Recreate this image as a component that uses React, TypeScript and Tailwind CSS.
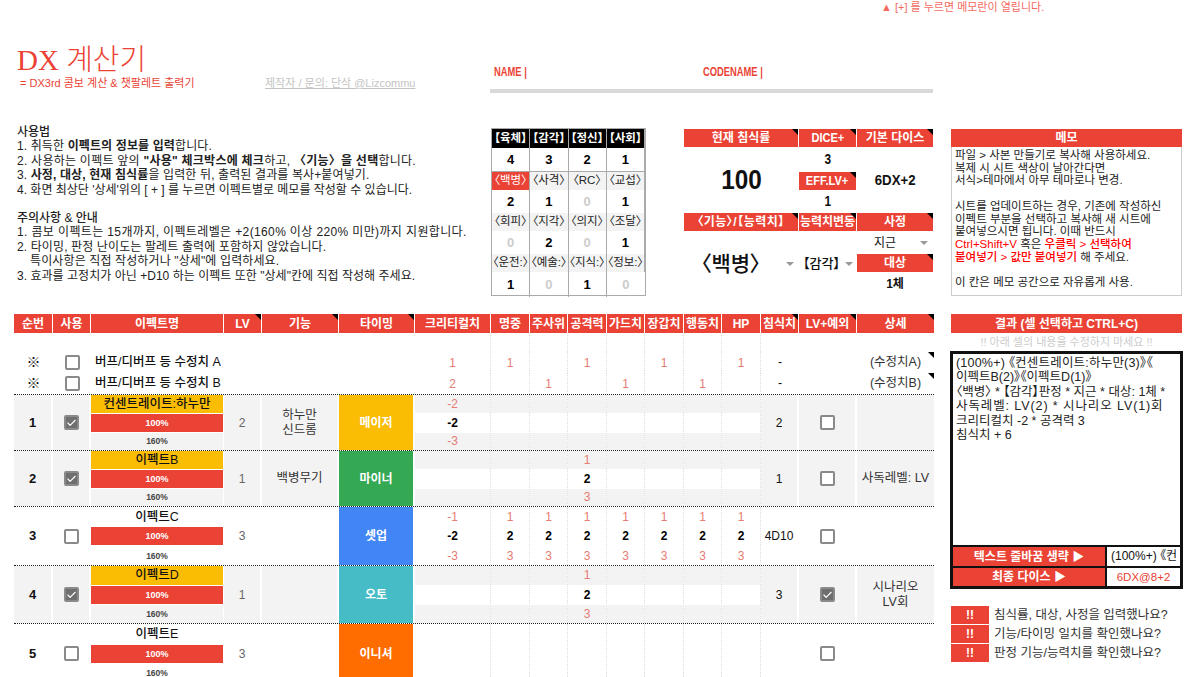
import { Check } from 'lucide-react'
import type { ReactNode } from 'react'

const cols = 'grid grid-cols-[39px_38px_133px_38px_77px_76px_76px_39px_38px_39px_38px_39px_38px_39px_38px_58px_77px]'
const palt = "[font-feature-settings:'palt']"

const headers: [string, boolean][] = [
  ['순번', false], ['사용', false], ['이펙트명', false], ['LV', true], ['기능', true], ['타이밍', true],
  ['크리티컬치', false], ['명중', false], ['주사위', false], ['공격력', false], ['가드치', false],
  ['장갑치', false], ['행동치', false], ['HP', false], ['침식치', true], ['LV+예외', true], ['상세', true],
]

interface Effect {
  no: number
  name: string
  used: boolean
  lv: number
  skill?: string[]
  timing: string
  timingBg: string
  crit?: [string, string, string]
  stats: number[]
  erosion: string
  lvEx: boolean
  note?: string[]
  height: string
}

const effects: Effect[] = [
  { no: 1, name: '컨센트레이트:하누만', used: true, lv: 2, skill: ['하누만', '신드롬'], timing: '메이저', timingBg: 'bg-[#fbbc04]', crit: ['-2', '-2', '-3'], stats: [], erosion: '2', lvEx: false, height: 'h-[56px]' },
  { no: 2, name: '이펙트B', used: true, lv: 1, skill: ['백병무기'], timing: '마이너', timingBg: 'bg-[#34a853]', stats: [2], erosion: '1', lvEx: false, note: ['사독레벨: LV'], height: 'h-[56px]' },
  { no: 3, name: '이펙트C', used: false, lv: 3, timing: '셋업', timingBg: 'bg-[#4285f4]', crit: ['-1', '-2', '-3'], stats: [0, 1, 2, 3, 4, 5, 6], erosion: '4D10', lvEx: false, height: 'h-[59px]' },
  { no: 4, name: '이펙트D', used: true, lv: 1, timing: '오토', timingBg: 'bg-[#46bdc6]', stats: [2], erosion: '3', lvEx: true, note: ['시나리오', 'LV회'], height: 'h-[58px]' },
  { no: 5, name: '이펙트E', used: false, lv: 3, timing: '이니셔', timingBg: 'bg-[#ff6d01]', stats: [], erosion: '', lvEx: false, height: 'h-[60px]' },
]

const attrs = [
  { cells: ['【육체】', '【감각】', '【정신】', '【사회】'] },
  { vals: [4, 3, 2, 1] },
  { cells: ['〈백병〉', '〈사격〉', '〈RC〉', '〈교섭〉'] },
  { vals: [2, 1, 0, 1] },
  { cells: ['〈회피〉', '〈지각〉', '〈의지〉', '〈조달〉'] },
  { vals: [0, 2, 0, 1] },
  { cells: ['〈운전:〉', '〈예술:〉', '〈지식:〉', '〈정보:〉'] },
  { vals: [1, 0, 1, 0] },
]

function Corner() {
  return <span className="absolute right-0 top-0 border-l-[6px] border-t-[6px] border-l-transparent border-t-black" />
}

function Arrow() {
  return <span className="inline-block border-x-[4px] border-t-[4px] border-x-transparent border-t-[#999]" />
}

function Box({ checked }: { checked: boolean }) {
  return (
    <span className={`flex h-[15px] w-[15px] items-center justify-center rounded-[2px] border-2 border-[#8a8a8a] ${checked ? 'bg-[#6f6f6f]' : 'bg-white'}`}>
      {checked && <Check size={12} strokeWidth={2.5} className="text-white" />}
    </span>
  )
}

function Head({ children, corner = false, className = '' }: { children: ReactNode; corner?: boolean; className?: string }) {
  return (
    <div className={`relative flex items-center justify-center bg-[#ea4335] text-[12px] font-bold text-white ${className}`}>
      {children}
      {corner && <Corner />}
    </div>
  )
}

function Triple({ top, mid, bottom, active }: { top?: string; mid?: string; bottom?: string; active: boolean }) {
  const edge = active ? 'bg-[#f3f3f3]' : 'bg-white'
  return (
    <div className="grid grid-rows-[1fr_20px_1fr] border-r border-dotted border-r-[#ddd] text-center text-[12px] leading-[14px]">
      <div className={`flex items-center justify-center text-[#e67c73] ${edge}`}>{top}</div>
      <div className="flex items-center justify-center bg-white font-bold text-black">{mid}</div>
      <div className={`flex items-center justify-center text-[#e67c73] ${edge}`}>{bottom}</div>
    </div>
  )
}

function EffectRow({ e }: { e: Effect }) {
  const shade = e.used ? 'bg-[#f3f3f3]' : 'bg-white'
  return (
    <div className={`${cols} ${e.height} border-t border-dotted border-t-[#222]`}>
      <div className={`flex items-center justify-center border-r-2 border-r-white text-[13px] font-bold ${shade}`}>{e.no}</div>
      <div className={`flex items-center justify-center border-r-2 border-r-white ${shade}`}><Box checked={e.used} /></div>
      <div className="grid grid-rows-[1fr_18px_1fr] gap-y-px pr-px text-center leading-[14px]">
        <div className={`flex items-center justify-center text-[12.5px] font-medium ${e.used ? 'bg-[#fbbc04]' : 'bg-white'}`}>{e.name}</div>
        <div className="flex items-center justify-center bg-[#ea4335] text-[9px] font-bold text-white">100%</div>
        <div className={`flex items-center justify-center text-[8.5px] font-bold text-[#444] ${shade}`}>160%</div>
      </div>
      <div className={`flex items-center justify-center border-r-2 border-r-white text-[12px] text-[#666] ${shade}`}>{e.lv}</div>
      <div className={`flex flex-col items-center justify-center border-r-2 border-r-white text-[12.5px] leading-[15px] text-[#333] ${shade}`}>
        {e.skill?.map((s) => <div key={s}>{s}</div>)}
      </div>
      <div className={`flex items-center justify-center border-r-2 border-r-white text-[12px] font-bold text-white ${e.timingBg}`}>{e.timing}</div>
      <Triple active={e.used} top={e.crit?.[0]} mid={e.crit?.[1]} bottom={e.crit?.[2]} />
      {[0, 1, 2, 3, 4, 5, 6].map((i) => {
        const on = e.stats.length > 1 || e.stats[0] === i
        return <Triple key={i} active={e.used} top={on ? '1' : undefined} mid={on ? '2' : undefined} bottom={on ? '3' : undefined} />
      })}
      <div className={`flex items-center justify-center border-r-2 border-r-white text-[12px] ${shade}`}>{e.erosion}</div>
      <div className={`flex items-center justify-center border-r-2 border-r-white ${shade}`}><Box checked={e.lvEx} /></div>
      <div className={`flex flex-col items-center justify-center text-[12.5px] leading-[15px] text-[#333] ${shade}`}>
        {e.note?.map((n) => <div key={n}>{n}</div>)}
      </div>
    </div>
  )
}

function ModRow({ name, crit, on, note }: { name: string; crit: string; on: number[]; note: string }) {
  return (
    <div className={`${cols} h-[21px] text-[12.5px]`}>
      <div className="flex items-center justify-center text-[14px] font-bold">※</div>
      <div className="flex items-center justify-center"><Box checked={false} /></div>
      <div className="col-span-4 flex items-center pl-[4px] font-medium">{name}</div>
      <div className="flex items-center justify-center border-r border-dotted border-r-[#ddd] text-[12px] text-[#e67c73]">{crit}</div>
      {[0, 1, 2, 3, 4, 5, 6].map((i) => (
        <div key={i} className="flex items-center justify-center border-r border-dotted border-r-[#ddd] text-[12px] text-[#e67c73]">{on.includes(i) ? '1' : ''}</div>
      ))}
      <div className="flex items-center justify-center">-</div>
      <div />
      <div className="relative flex items-center justify-center text-[#333]">{note}<Corner /></div>
    </div>
  )
}

export default function App() {
  return (
    <div className="h-[677px] w-[1200px] overflow-hidden bg-white pl-[14px] font-['Liberation_Sans','Noto_Sans_CJK_KR',sans-serif] text-[#111]">
      <div className="h-[14px] pl-[867px] text-[11px] leading-[14px] text-[#f46a60]">▲ [+] 를 누르면 메모란이 열립니다.</div>

      <div className="flex h-[114px]">
        <div className="w-[476px] pl-[3px] pt-[30px]">
          <div className="font-['Liberation_Serif','Noto_Sans_CJK_KR',serif] text-[29px] font-light leading-[32px] text-[#ea4335]">DX 계산기</div>
          <div className="flex text-[11px] leading-[14px]">
            <span className="w-[248px] pl-[3px] text-[#ea4335]">= DX3rd 콤보 계산 &amp; 챗팔레트 출력기</span>
            <span className="text-[#c4c4c4] underline">제작자 / 문의: 단삭 @Lizcommu</span>
          </div>
        </div>
        <div className="w-[443px] pt-[37px]">
          <div className="flex h-[38px] items-end pb-[10px] pl-[4px] text-[12px] font-bold leading-[14px] text-[#ea4335]">
            <span className="w-[209px]"><span className="inline-block origin-left scale-x-[0.78]">NAME |</span></span>
            <span className="inline-block origin-left scale-x-[0.78]">CODENAME |</span>
          </div>
          <div className="h-[4px] bg-[#d9d9d9]" />
        </div>
      </div>

      <div className="flex h-[168px]">
        <div className="-mt-[3px] w-[477px] whitespace-nowrap pl-[3px] text-[12px] leading-[14.4px] text-[#222]">
          <div className="font-medium">사용법</div>
          <div className="tracking-[0.12px]">1. 취득한 <b>이펙트의 정보를 입력</b>합니다.</div>
          <div className="tracking-[0.25px]">2. 사용하는 이펙트 앞의 <b>"사용" 체크박스에 체크</b>하고, <b>〈기능〉을 선택</b>합니다.</div>
          <div className="tracking-[0.12px]">3. <b>사정, 대상, 현재 침식률</b>을 입력한 뒤, 출력된 결과를 복사+붙여넣기.</div>
          <div>4. 화면 최상단 '상세'위의 [ + ] 를 누르면 이펙트별로 메모를 작성할 수 있습니다.</div>
          <div className="mt-[14px] font-medium">주의사항 &amp; 안내</div>
          <div className="tracking-[0.37px]">1. 콤보 이펙트는 15개까지, 이펙트레벨은 +2(160% 이상 220% 미만)까지 지원합니다.</div>
          <div className="tracking-[0.12px]">2. 타이밍, 판정 난이도는 팔레트 출력에 포함하지 않았습니다.</div>
          <div className="pl-[13px] tracking-[0.12px]">특이사항은 직접 작성하거나 "상세"에 입력하세요.</div>
          <div className="tracking-[0.03px]">3. 효과를 고정치가 아닌 +D10 하는 이펙트 또한 "상세"칸에 직접 작성해 주세요.</div>
        </div>

        <div className={`grid h-[168px] w-[155px] grid-cols-4 grid-rows-[19px_24px_18px_23px_18px_23px_18px_25px] border border-[#aaa] text-center ${palt}`}>
          {attrs.map((row, r) =>
            row.cells
              ? row.cells.map((c) => (
                  <div key={c} className={`flex items-center justify-center whitespace-nowrap border-r border-r-[#aaa] text-[11.5px] last:border-r-0 ${r === 0 ? 'bg-black font-bold text-white' : c === '〈백병〉' ? 'bg-[#ea4335] text-white' : 'bg-[#f3f3f3] text-[#222]'}`}>
                    {c}
                  </div>
                ))
              : row.vals?.map((v, i) => (
                  <div key={i} className={`flex items-center justify-center border-r border-r-[#aaa] text-[13px] font-bold last:border-r-0 ${r === 1 ? 'border-b border-b-[#aaa]' : ''} ${v === 0 ? 'text-[#ccc]' : 'text-black'}`}>
                    {v}
                  </div>
                )),
          )}
        </div>

        <div className="ml-[38px] mt-px grid h-[167px] w-[249px] grid-cols-[115px_58px_76px] grid-rows-[18px_25px_18px_23px_18px_23px_18px_24px]">
          <Head corner className="mr-px">현재 침식률</Head>
          <Head corner className="mr-px"><span className="inline-block scale-x-[0.92]">DICE+</span></Head>
          <Head corner>기본 다이스</Head>

          <div className="row-span-3 flex items-center justify-center text-[27px] font-bold"><span className="inline-block scale-x-[0.9]">100</span></div>
          <div className="flex items-center justify-center text-[14px] font-bold"><span className="inline-block scale-x-[0.85]">3</span></div>
          <div className="row-span-3 flex items-center justify-center text-[15px] font-bold"><span className="inline-block scale-x-[0.88]">6DX+2</span></div>
          <Head corner className="mr-px"><span className="inline-block scale-x-[0.92]">EFF.LV+</span></Head>
          <div className="flex items-center justify-center text-[14px] font-bold"><span className="inline-block scale-x-[0.85]">1</span></div>

          <Head corner className={`mr-px tracking-[0.5px] ${palt}`}>〈기능〉/【능력치】</Head>
          <Head corner className="mr-px text-[11px]">능력치변동</Head>
          <Head corner>사정</Head>

          <div className="row-span-3 flex items-center pl-[17px] pr-[5px]">
            <span className={`flex-1 whitespace-nowrap text-[21px] font-medium ${palt}`}>〈백병〉</span>
            <Arrow />
          </div>
          <div className={`row-span-3 flex items-center justify-center gap-[5px] whitespace-nowrap text-[13px] font-medium ${palt}`}>
            【감각】<Arrow />
          </div>
          <div className="flex items-center justify-between pl-[17px] pr-[5px] text-[12px]">지근 <Arrow /></div>
          <Head corner>대상</Head>
          <div className="flex items-center justify-center text-[12px] font-bold">1체</div>
        </div>

        <div className="ml-[18px] mt-px flex h-[167px] w-[231px] flex-col">
          <Head className="h-[18px] shrink-0">메모</Head>
          <div className="flex-1 whitespace-nowrap border border-t-0 border-[#ccc] px-[3px] pt-[2px] text-[11.5px] leading-[12.7px] text-[#222]">
            <div>파일 &gt; 사본 만들기로 복사해 사용하세요.</div>
            <div>복제 시 시트 색상이 날아간다면</div>
            <div>서식&gt;테마에서 아무 테마로나 변경.</div>
            <div className="h-[12.7px]" />
            <div>시트를 업데이트하는 경우, 기존에 작성하신</div>
            <div>이펙트 부분을 선택하고 복사해 새 시트에</div>
            <div>붙여넣으시면 됩니다. 이때 반드시</div>
            <div><span className="font-medium text-[#f00]">Ctrl+Shift+V</span> 혹은 <span className="font-medium text-[#f00]">우클릭 &gt; 선택하여</span></div>
            <div><span className="font-medium text-[#f00]">붙여넣기 &gt; 값만 붙여넣기</span> 해 주세요.</div>
            <div className="h-[12.7px]" />
            <div>이 칸은 메모 공간으로 자유롭게 사용.</div>
          </div>
        </div>
      </div>

      <div className="mt-[18px] flex">
        <div className="w-[920px]">
          <div className={`${cols} h-[19px]`}>
            {headers.map(([label, corner]) => (
              <Head key={label} corner={corner} className="whitespace-nowrap border-r border-r-white last:border-r-0">{label}</Head>
            ))}
          </div>
          <div className={`${cols} h-[19px]`}>
            <div className="col-span-6" />
            {[0, 1, 2, 3, 4, 5, 6, 7].map((i) => <div key={i} className="border-r border-dotted border-r-[#ddd]" />)}
          </div>
          <ModRow name="버프/디버프 등 수정치 A" crit="1" on={[0, 2, 4, 6]} note="(수정치A)" />
          <ModRow name="버프/디버프 등 수정치 B" crit="2" on={[1, 3, 5]} note="(수정치B)" />
          {effects.map((e) => <EffectRow key={e.no} e={e} />)}
        </div>

        <div className="ml-[17px] w-[231px]">
          <Head className="h-[19px]">결과 (셀 선택하고 CTRL+C)</Head>
          <div className="h-[18px] text-center text-[11px] leading-[18px] text-[#ccc]">!! 아래 셀의 내용을 수정하지 마세요 !!</div>
          <div className="-ml-px w-[233px] border-[3px] border-[#111] bg-[#111]">
            <div className={`h-[191px] whitespace-nowrap bg-white pl-[3px] pt-[2px] text-[12.5px] leading-[14.4px] text-[#222] ${palt}`}>
              <span className="tracking-[0.2px]">(100%+) 《컨센트레이트:하누만(3)》《</span><br />
              이펙트B(2)》《이펙트D(1)》<br />
              〈백병〉 * 【감각】판정 * 지근 * 대상: 1체 *<br />
              <span className="tracking-[0.9px]">사독레벨: LV(2) * 시나리오 LV(1)회</span><br />
              크리티컬치 -2 * 공격력 3<br />
              침식치 + 6
            </div>
            <div className="mt-[2px] flex h-[19px]">
              <Head className="w-[152px]">텍스트 줄바꿈 생략 ▶</Head>
              <div className={`ml-[2px] w-[73px] overflow-hidden whitespace-nowrap bg-white pl-[4px] text-[12px] leading-[19px] ${palt}`}>(100%+) 《컨</div>
            </div>
            <div className="mt-[2px] flex h-[18px]">
              <Head className="w-[152px]">최종 다이스 ▶</Head>
              <div className="ml-[2px] flex-1 bg-white text-center text-[11.5px] font-medium leading-[18px] text-[#ea4335]">6DX@8+2</div>
            </div>
          </div>
          <div className="mt-[17px] flex flex-col gap-px">
            {['침식률, 대상, 사정을 입력했나요?', '기능/타이밍 일치를 확인했나요?', '판정 기능/능력치를 확인했나요?'].map((q) => (
              <div key={q} className="flex h-[18px] items-center text-[12.5px] text-[#333]">
                <Head className="mr-[5px] h-[18px] w-[38px]">!!</Head>
                {q}
              </div>
            ))}
          </div>
        </div>
      </div>
    </div>
  )
}
